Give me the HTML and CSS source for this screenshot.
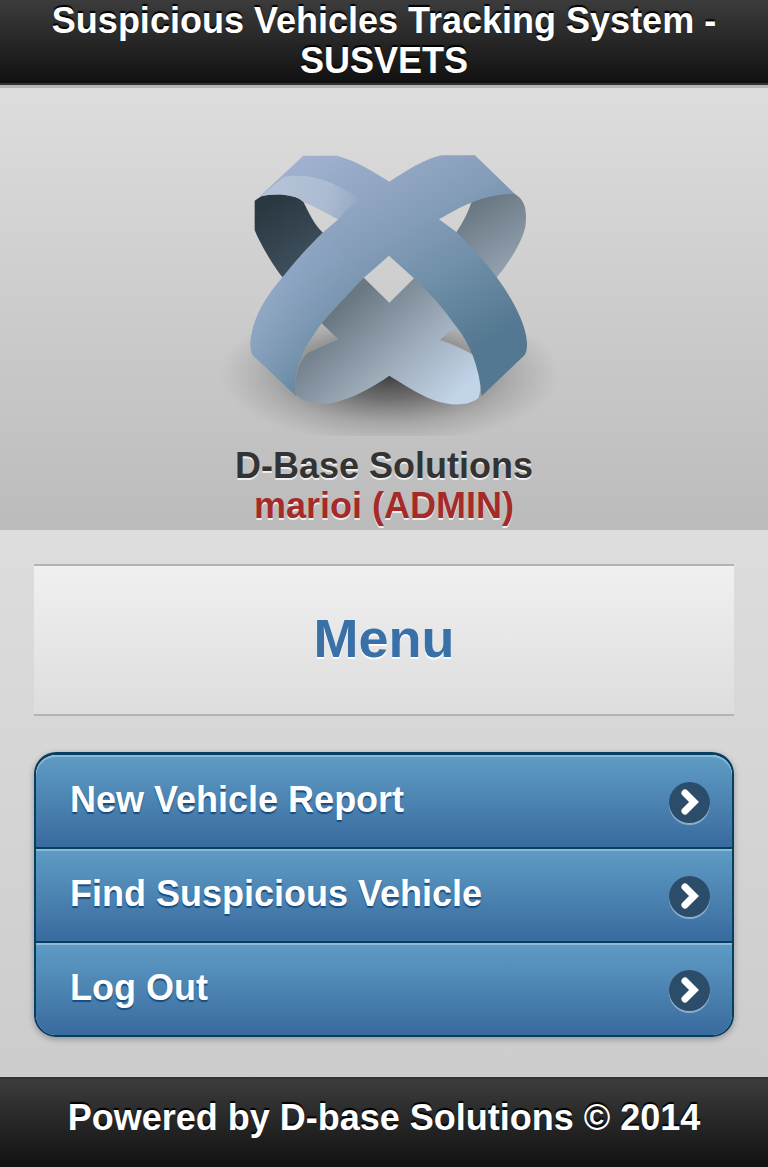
FILE: index.html
```html
<!DOCTYPE html>
<html lang="en">
  <head>
    <meta charset="UTF-8" />
    <meta name="viewport" content="width=device-width, initial-scale=1.0" />
    <link rel="stylesheet" href="styles.css">
    <title>SUSVETS</title>
  </head>
  <body>
    <header class="bar header">
      <h1>Suspicious Vehicles Tracking System - SUSVETS</h1>
    </header>
    <section class="brand">
      <svg class="logo" viewBox="-36 24 1056 864" role="img" aria-label="D-Base Solutions logo">
        <defs>
          <linearGradient id="front" gradientUnits="userSpaceOnUse" x1="300" y1="20" x2="720" y2="750">
            <stop offset="0" stop-color="#a0b2cf" />
            <stop offset="0.35" stop-color="#889fbc" />
            <stop offset="0.6" stop-color="#7190a9" />
            <stop offset="0.9" stop-color="#547891" />
          </linearGradient>
          <linearGradient id="edge" gradientUnits="userSpaceOnUse" x1="100" y1="500" x2="320" y2="610">
            <stop offset="0" stop-color="#94abc8" stop-opacity="0.9" />
            <stop offset="1" stop-color="#7f9dba" stop-opacity="0" />
          </linearGradient>
          <linearGradient id="inner" gradientUnits="userSpaceOnUse" x1="400" y1="470" x2="690" y2="790">
            <stop offset="0" stop-color="#6a7884" />
            <stop offset="0.5" stop-color="#9ba9b7" />
            <stop offset="1" stop-color="#c2d4e8" />
          </linearGradient>
          <linearGradient id="dark" gradientUnits="userSpaceOnUse" x1="130" y1="200" x2="240" y2="360">
            <stop offset="0" stop-color="#293841" />
            <stop offset="1" stop-color="#3d4d5a" />
          </linearGradient>
          <linearGradient id="back" gradientUnits="userSpaceOnUse" x1="760" y1="190" x2="870" y2="370">
            <stop offset="0" stop-color="#697783" />
            <stop offset="1" stop-color="#919fad" />
          </linearGradient>
          <linearGradient id="shine" gradientUnits="userSpaceOnUse" x1="180" y1="130" x2="420" y2="190">
            <stop offset="0" stop-color="#b3c2d6" />
            <stop offset="0.6" stop-color="#abbbd1" />
            <stop offset="1" stop-color="#94a8c3" />
          </linearGradient>
          <radialGradient id="shadow">
            <stop offset="0" stop-color="#222" stop-opacity="0.85" />
            <stop offset="0.35" stop-color="#333" stop-opacity="0.6" />
            <stop offset="0.7" stop-color="#444" stop-opacity="0.22" />
            <stop offset="1" stop-color="#555" stop-opacity="0" />
          </radialGradient>
        </defs>
        <ellipse cx="508" cy="700" rx="510" ry="215" fill="url(#shadow)" />
        <path fill="url(#dark)" d="M104 182 L130 164 C175 156 225 162 250 185 C265 215 280 250 310 280 L188 412 C160 380 115 300 104 270 Z" />
        <path fill="url(#back)" d="M755 185 C790 160 850 156 885 162 C915 180 922 210 916 260 C905 310 865 370 830 412 L708 278 C730 245 745 215 755 185 Z" />
        <path fill="url(#inner)" d="M430 412 L508 488 L585 412 L640 440 L712 557 Q685 575 660 600 Q720 620 768 650 C785 690 788 740 775 775 C740 800 690 798 640 780 C590 760 545 730 508 707 C460 740 400 775 340 788 C290 798 250 785 228 765 C220 720 235 670 262 640 Q305 620 355 598 L303 548 Z" />
        <path fill="url(#front)" d="M118 170 L250 47 H350 C410 62 460 95 508 125 C560 92 610 58 665 46 H765 L885 162 C800 158 720 200 657 238 L708 275 C760 325 800 370 830 412 C880 480 915 550 920 600 Q924 630 914 645 L785 768 C778 680 750 610 705 555 C670 505 630 460 585 418 L507 347 L430 415 C380 465 340 510 305 550 C250 625 215 690 228 768 L98 645 Q90 635 92 600 C98 550 120 490 188 412 C220 370 265 320 308 278 L355 238 C320 220 290 200 250 185 C220 160 160 160 118 170 Z" />
        <path fill="url(#edge)" d="M308 278 C265 320 220 370 188 412 C120 490 98 550 92 600 Q90 635 98 645 L228 768 C215 690 250 625 305 550 C340 510 380 465 430 415 Z" />
        <path fill="url(#shine)" d="M118 170 L190 112 C280 92 370 140 420 180 C390 195 370 220 355 238 C320 220 290 200 250 185 C220 160 160 160 118 170 Z" />
      </svg>
      <p>D-Base Solutions</p>
      <p class="user">marioi (ADMIN)</p>
    </section>
    <main>
      <h2>Menu</h2>
      <ul class="menu">
        <li>
          <a href="#report">New Vehicle Report
            <span class="icon"><svg viewBox="0 0 41 41"><path d="M16 11 L25 20 L16 29" /></svg></span>
          </a>
        </li>
        <li>
          <a href="#find">Find Suspicious Vehicle
            <span class="icon"><svg viewBox="0 0 41 41"><path d="M16 11 L25 20 L16 29" /></svg></span>
          </a>
        </li>
        <li>
          <a href="#logout">Log Out
            <span class="icon"><svg viewBox="0 0 41 41"><path d="M16 11 L25 20 L16 29" /></svg></span>
          </a>
        </li>
      </ul>
    </main>
    <footer class="bar footer">
      <p>Powered by D-base Solutions © 2014</p>
    </footer>
  </body>
</html>
```

FILE: styles.css
```css
* {
  margin: 0;
  padding: 0;
  box-sizing: border-box;
}
body {
  min-height: 100vh;
  display: flex;
  flex-direction: column;
  font-family: "Liberation Sans", Arial, sans-serif;
  font-size: 36px;
  font-weight: bold;
  line-height: 40px;
  color: #333;
}
.bar {
  color: white;
  text-align: center;
  text-shadow: 0 -2px 1px black;
  background: linear-gradient(#3c3c3c, #111);
}
.header {
  padding: 1px 0 2px;
  border-bottom: 2px solid #333;
}
.footer {
  padding: 19px 0 29px;
  border-top: 2px solid #333;
}
h1 {
  font-size: 36px;
}
.brand {
  padding: 60px 0 4px;
  border-top: 3px solid #b8b6b8;
  text-align: center;
  text-shadow: 0 2px 0 #eee;
  background: linear-gradient(#ddd, #bbb);
}
.logo {
  display: block;
  width: 352px;
  height: 288px;
  margin: 0 auto 10px;
}
.user {
  color: #a52a2a;
}
main {
  flex: 1;
  padding: 34px 34px 40px;
  background: linear-gradient(#ddd, #ccc);
}
h2 {
  margin-bottom: 36px;
  padding: 40px 0 44px;
  border: solid #b3b3b3;
  border-width: 2px 0;
  font-size: 54px;
  line-height: 64px;
  text-align: center;
  text-shadow: 0 2px 0 white;
  color: #3a70a8;
  background: linear-gradient(#f0f0f0, #ddd);
}
.menu {
  list-style: none;
  border: 2px solid #044062;
  border-top-width: 3px;
  border-radius: 22px;
  overflow: hidden;
  box-shadow: 0 2px 6px rgba(0, 0, 0, 0.3);
}
.menu li + li {
  border-top: 2px solid #044062;
}
.menu a {
  display: flex;
  justify-content: space-between;
  padding: 25px 22px 27px 34px;
  color: white;
  text-decoration: none;
  text-shadow: 0 2px 1px #194b7e;
  background: linear-gradient(#5f9cc5, #396b9e);
  box-shadow: inset 0 2px 0 rgba(255, 255, 255, 0.3);
}
.menu li:first-child a {
  border-radius: 20px 20px 0 0;
}
.icon {
  flex: none;
  width: 41px;
  height: 41px;
  margin: 2px 0 -3px;
  border-radius: 50%;
  background: #2c4d69;
  box-shadow: 0 2px 0 rgba(255, 255, 255, 0.4);
}
.icon svg {
  display: block;
  fill: none;
  stroke: white;
  stroke-width: 7;
  stroke-linecap: round;
}
```
